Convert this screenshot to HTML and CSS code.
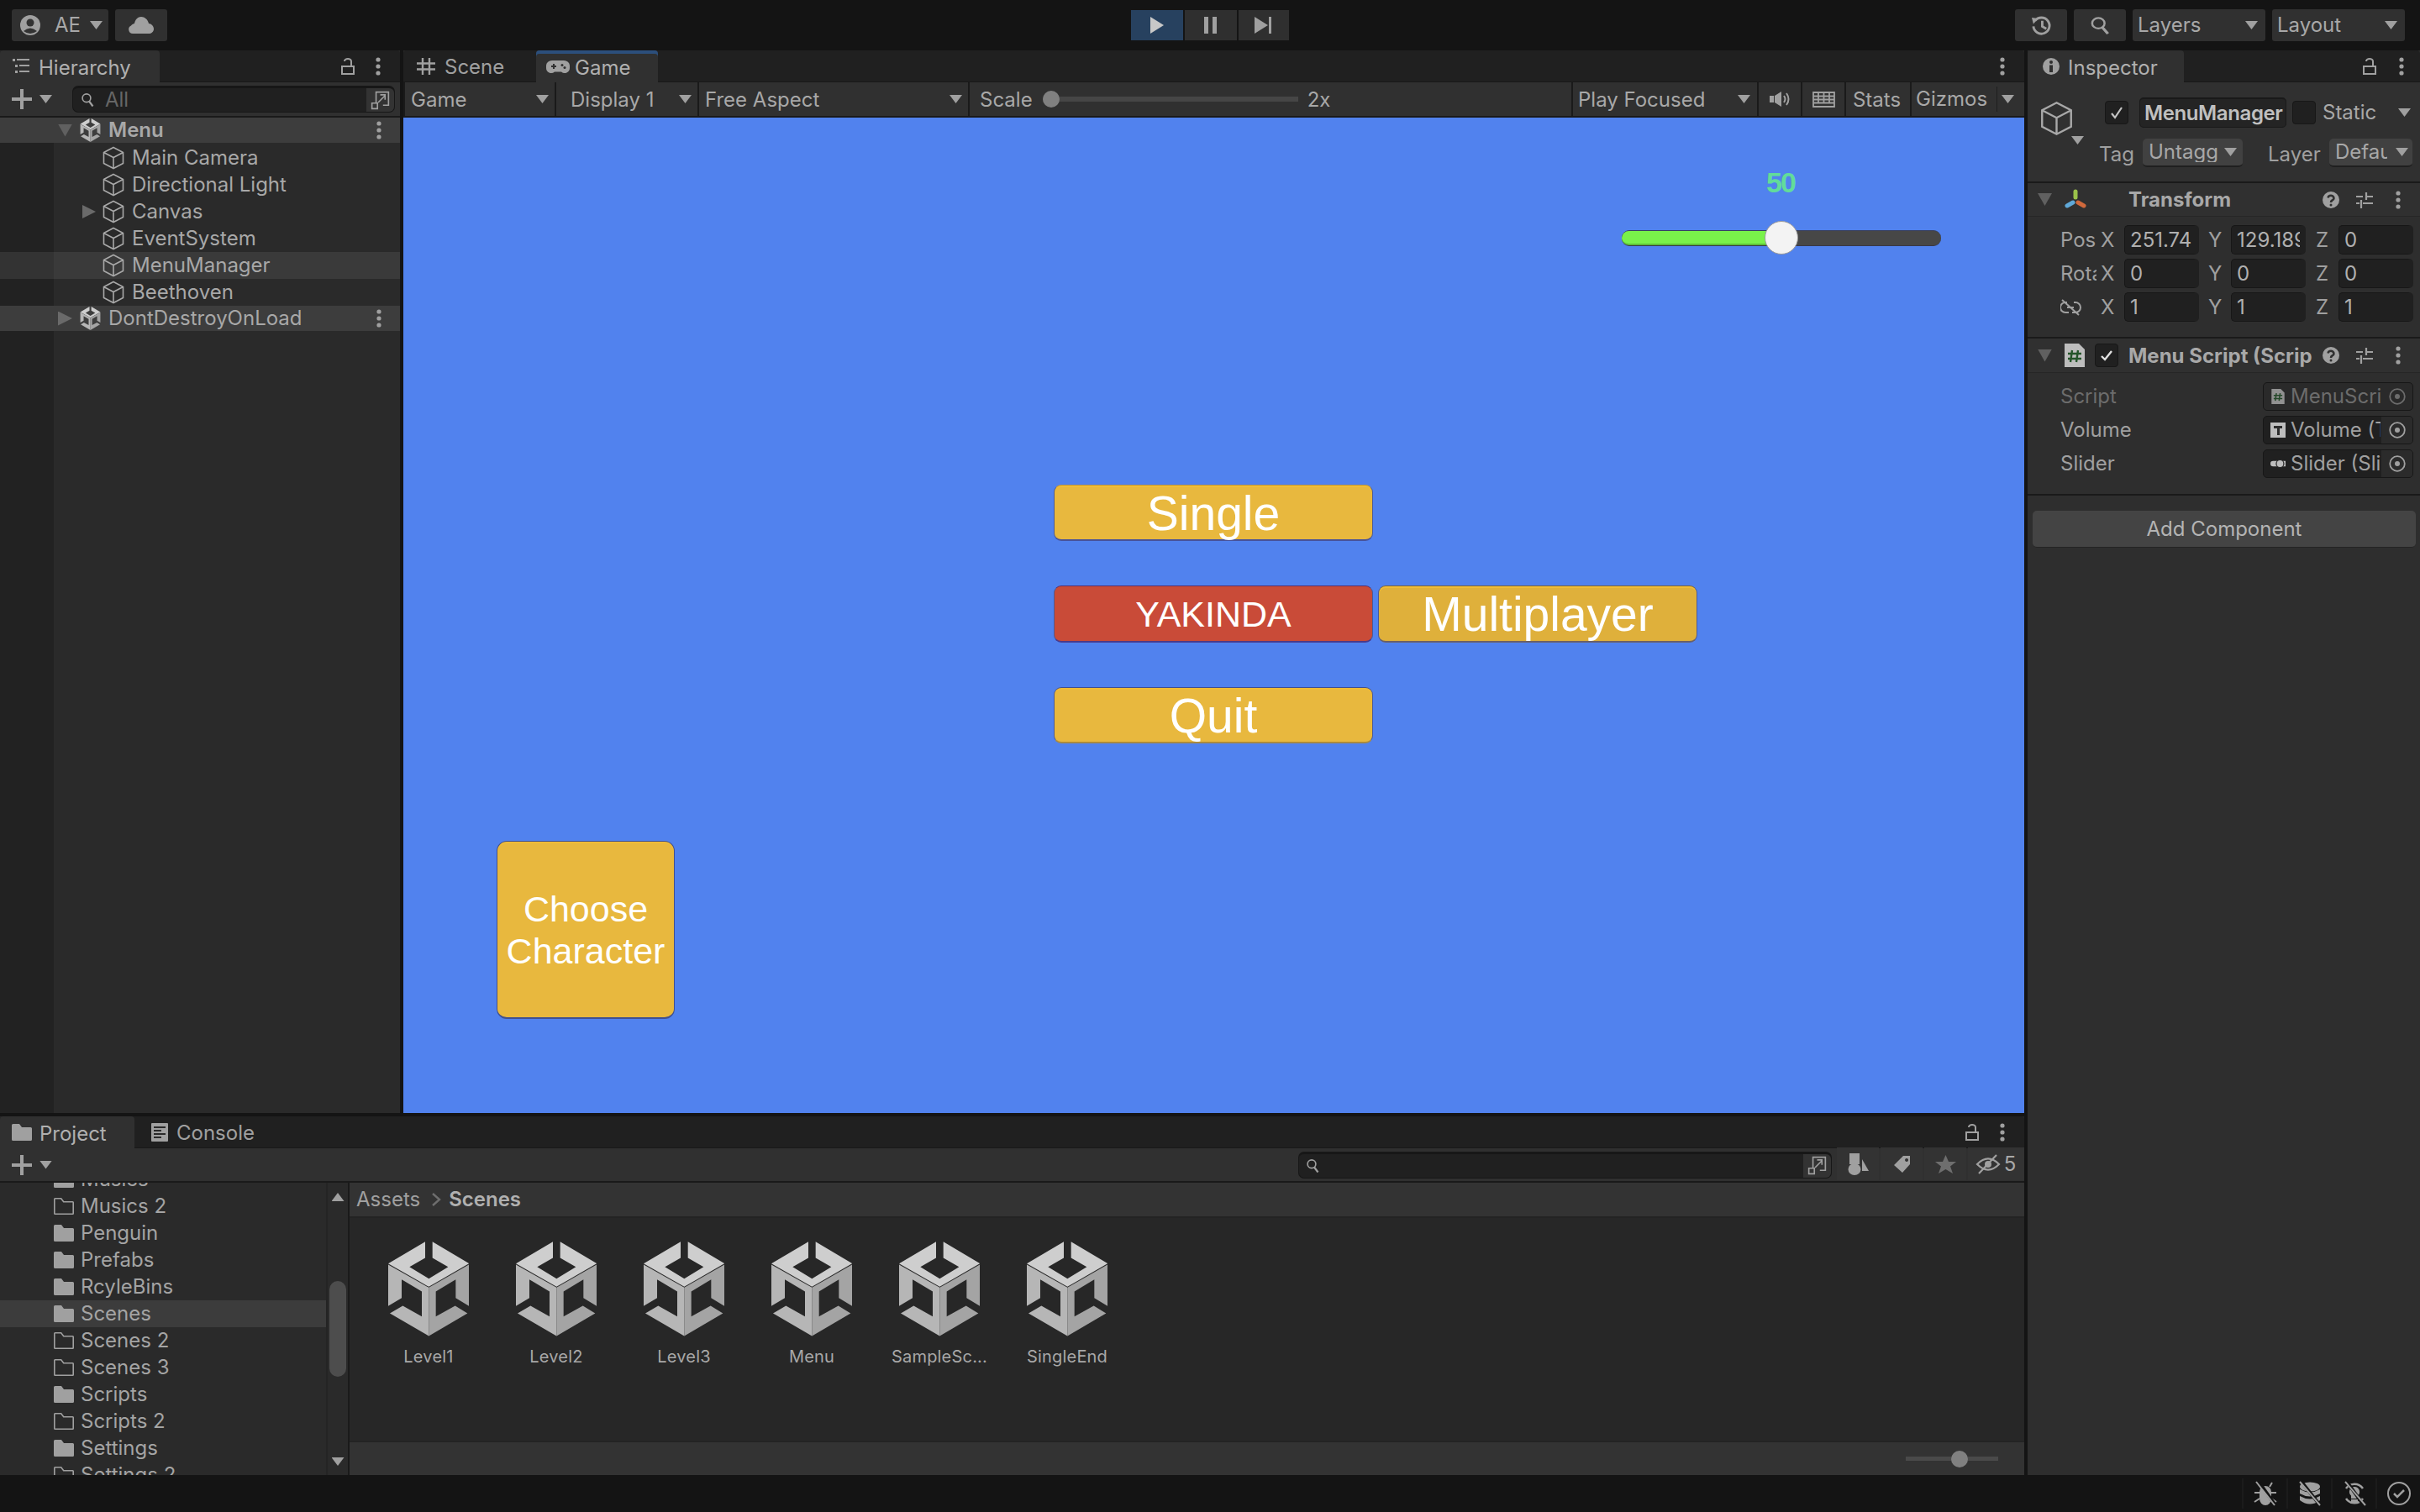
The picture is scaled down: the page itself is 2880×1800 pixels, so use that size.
FILE: index.html
```html
<!DOCTYPE html>
<html lang="en">
<head>
<meta charset="utf-8">
<title>Unity Editor</title>
<link rel="stylesheet" href="styles.css">
</head>
<body>
<svg class="defs" xmlns="http://www.w3.org/2000/svg">
  <symbol id="i-unity" viewBox="0 0 288 338">
    <path fill="#cecece" d="M132 0v58L76 90l69 42 69-42-56-32V0l131 78-144 83L0 78z"/>
    <path fill="#b6b6b6" d="M0 82l145 82v173L6 256l46-27 68 38v-89L48 135v66L0 230z"/>
    <path fill="#a4a4a4" d="M288 82l-143 82v173l138-81-44-27-69 38v-89l71-43v66l47 29z"/>
  </symbol>
  <symbol id="i-cube" viewBox="0 0 26 28">
    <path fill="none" stroke="currentColor" stroke-width="1.6" d="M13 1.500l11.500 6v13l-11.500 6-11.500-6v-13zM1.500 7.500l11.500 6 11.500-6M13 13.500v13"/>
  </symbol>
  <symbol id="i-dots" viewBox="0 0 8 22">
    <circle cx="4" cy="3" r="2.600" fill="currentColor"/><circle cx="4" cy="11" r="2.600" fill="currentColor"/><circle cx="4" cy="19" r="2.600" fill="currentColor"/>
  </symbol>
  <symbol id="i-lock" viewBox="0 0 16 20">
    <path fill="none" stroke="currentColor" stroke-width="2" d="M1 10h14v9H1zM4 4a4 3 0 0 1 8 0v6"/>
  </symbol>
  <symbol id="i-folder" viewBox="0 0 24 20">
    <path fill="currentColor" d="M0 1.500A1.500 1.500 0 0 1 1.500 0H9l3 4h10.500A1.500 1.500 0 0 1 24 5.500v13a1.500 1.500 0 0 1-1.500 1.500h-21A1.500 1.500 0 0 1 0 18.500z"/>
  </symbol>
  <symbol id="i-folder-o" viewBox="0 0 24 20">
    <path fill="none" stroke="currentColor" stroke-width="1.600" d="M.8 1.500q0-.7.7-.7h7.200l3 4h10.800q.7 0 .7.700v13q0 .7-.7.700h-21q-.7 0-.7-.7z"/>
  </symbol>
  <symbol id="i-search" viewBox="0 0 22 24">
    <circle cx="9" cy="9" r="6.500" fill="none" stroke="currentColor" stroke-width="2.200"/><path d="M13 14l6 8" stroke="currentColor" stroke-width="3"/>
  </symbol>
  <symbol id="i-scenesearch" viewBox="0 0 28 28">
    <path fill="none" stroke="currentColor" stroke-width="2" d="M8 18V2h18v19h-8"/><path fill="none" stroke="currentColor" stroke-width="2" d="M2 18h8v8H2zM11 17l10-10M14 6h7v7"/>
  </symbol>
  <symbol id="i-help" viewBox="0 0 20 20">
    <circle cx="10" cy="10" r="10" fill="currentColor"/><path fill="none" stroke="#303030" stroke-width="2.600" d="M6.500 7.500a3.500 3 0 1 1 5 3q-1.500.8-1.500 2.500"/><circle cx="10" cy="16" r="1.500" fill="#303030"/>
  </symbol>
  <symbol id="i-sliders" viewBox="0 0 20 20">
    <path fill="none" stroke="currentColor" stroke-width="2.200" d="M0 6h8M12 6h8M0 14h4M8 14h12M12 1v9M6 10v10"/>
  </symbol>
  <symbol id="i-target" viewBox="0 0 20 20">
    <circle cx="10" cy="10" r="8.800" fill="none" stroke="currentColor" stroke-width="1.800"/><circle cx="10" cy="10" r="3" fill="currentColor"/>
  </symbol>
  <symbol id="i-script" viewBox="0 0 24 28">
    <path fill="#bdbdbd" d="M0 0h17l7 7v21H0z"/><path fill="none" stroke="#24552a" stroke-width="2.400" d="M9 8l-2 14M16 8l-2 14M4 12h16M4 18h16"/>
  </symbol>
</svg>

<div class="app">
  <header class="topbar">
    <div class="top-left">
      <div class="tbtn account">
        <svg class="ic-user" viewBox="0 0 24 24"><circle cx="12" cy="12" r="12" fill="#a0a0a0"/><circle cx="12" cy="9" r="4.500" fill="#333"/><path d="M4 19q8-7 16 0-8 6-16 0z" fill="#333"/></svg>
        <span class="account-name">AE</span>
        <i class="tri-down"></i>
      </div>
      <div class="tbtn cloud">
        <svg class="ic-cloud" viewBox="0 0 30 20"><path fill="#a0a0a0" d="M5 20a5 5 0 0 1-2-9.500C4 9 6 8 7 8 8 3 11 0 15 0s8 3 9 8c3 0 6 3 6 6.500S27 20 24 20z"/></svg>
      </div>
    </div>
    <div class="play-group">
      <div class="pbtn active"><svg viewBox="0 0 16 20" class="ic-play"><path fill="#c8c8c8" d="M0 0l16 10L0 20z"/></svg></div>
      <div class="pbtn"><svg viewBox="0 0 16 20" class="ic-play"><path fill="#a0a0a0" d="M0 0h5v20H0zM10 0h5v20h-5z"/></svg></div>
      <div class="pbtn"><svg viewBox="0 0 22 20" class="ic-step"><path fill="#a0a0a0" d="M0 0l16 10L0 20zM17 0h3v20h-3z"/></svg></div>
    </div>
    <div class="top-right">
      <div class="tbtn square"><svg class="ic-hist" viewBox="0 0 26 24"><path fill="none" stroke="#a0a0a0" stroke-width="3" d="M5 6a10 10 0 1 1-2 7M14 6v7l5 3"/><path fill="#a0a0a0" d="M1 2l8 1-6 7z"/></svg></div>
      <div class="tbtn square"><svg class="ic-hist" viewBox="0 0 22 24" preserveAspectRatio="none"><use href="#i-search" color="#a0a0a0"/></svg></div>
      <div class="tbtn drop"><span>Layers</span><i class="tri-down"></i></div>
      <div class="tbtn drop"><span>Layout</span><i class="tri-down"></i></div>
    </div>
  </header>

  <div class="workspace">
    <div class="left-col">
      <div class="top-row">
        <section class="panel hierarchy">
          <div class="tabstrip">
            <div class="tab active hier-tab">
              <svg class="ic-tab" viewBox="0 0 20 18"><path fill="#a0a0a0" d="M0 0h3v3H0zM5 0h15v2H5zM3 7h3v3H3zM8 7h12v2H8zM3 14h3v3H3zM8 14h12v2H8z"/></svg>
              <span>Hierarchy</span>
            </div>
            <div class="tab-tools">
              <svg class="ic-lock"><use href="#i-lock"/></svg>
              <svg class="ic-dots"><use href="#i-dots"/></svg>
            </div>
          </div>
          <div class="hier-toolbar">
            <div class="plus-add"><span class="plus"></span><i class="tri-down"></i></div>
            <div class="search hier-search">
              <svg class="ic-mini-search"><use href="#i-search"/></svg>
              <span class="search-hint">All</span>
              <div class="search-btn"><svg class="ic-ss"><use href="#i-scenesearch"/></svg></div>
            </div>
          </div>
          <div class="hier-list">
            <div class="scene-row">
              <i class="tri-down large scene-arrow"></i>
              <svg class="ic-scene"><use href="#i-unity"/></svg>
              <span class="bold">Menu</span>
              <svg class="ic-dots row-dots"><use href="#i-dots"/></svg>
            </div>
            <div class="go-list">
              <div class="go-row"><svg class="ic-cube"><use href="#i-cube"/></svg><span>Main Camera</span></div>
              <div class="go-row"><svg class="ic-cube"><use href="#i-cube"/></svg><span>Directional Light</span></div>
              <div class="go-row"><i class="tri-right go-arrow"></i><svg class="ic-cube"><use href="#i-cube"/></svg><span>Canvas</span></div>
              <div class="go-row"><svg class="ic-cube"><use href="#i-cube"/></svg><span>EventSystem</span></div>
              <div class="go-row hover"><svg class="ic-cube"><use href="#i-cube"/></svg><span>MenuManager</span></div>
              <div class="go-row"><svg class="ic-cube"><use href="#i-cube"/></svg><span>Beethoven</span></div>
            </div>
            <div class="scene-row">
              <i class="tri-right scene-arrow"></i>
              <svg class="ic-scene"><use href="#i-unity"/></svg>
              <span>DontDestroyOnLoad</span>
              <svg class="ic-dots row-dots"><use href="#i-dots"/></svg>
            </div>
            <div class="hier-rest"></div>
          </div>
        </section>

        <section class="panel game">
          <div class="tabstrip">
            <div class="tab scene-tab">
              <svg class="ic-tab" viewBox="0 0 22 20"><path fill="none" stroke="#a0a0a0" stroke-width="2.400" d="M7 0v20M15 0v20M0 6.500h22M0 13.500h22"/></svg>
              <span>Scene</span>
            </div>
            <div class="tab active game-tab">
              <svg class="ic-pad" viewBox="0 0 28 15"><path fill="#a0a0a0" d="M7 0h14a7 6 0 0 1 7 6v3a6 6 0 0 1-10 4.500h-8A6 6 0 0 1 0 9V6a7 6 0 0 1 7-6z"/><path fill="#303030" d="M6 6h2V4h2v2h2v2h-2v2H8V8H6z"/><circle cx="19" cy="5.500" r="1.500" fill="#303030"/><circle cx="22" cy="8.500" r="1.500" fill="#303030"/></svg>
              <span>Game</span>
            </div>
            <div class="tab-tools"><svg class="ic-dots"><use href="#i-dots"/></svg></div>
          </div>
          <div class="game-toolbar">
            <div class="seg seg-game"><span>Game</span><i class="tri-down"></i></div>
            <div class="seg seg-display"><span>Display 1</span><i class="tri-down"></i></div>
            <div class="seg seg-aspect"><span>Free Aspect</span><i class="tri-down"></i></div>
            <div class="seg seg-scale">
              <span>Scale</span>
              <div class="scale-slider"><i class="knob"></i></div>
              <span>2x</span>
            </div>
            <div class="seg seg-play"><span>Play Focused</span><i class="tri-down"></i></div>
            <div class="seg seg-audio"><svg class="ic-audio" viewBox="0 0 25 18"><path fill="#a0a0a0" d="M0 5h5v8H0zM6 5l8-5v18l-8-5z"/><path fill="none" stroke="#a0a0a0" stroke-width="2" d="M17 5q3 4 0 8M20 2q5 7 0 14"/></svg></div>
            <div class="seg seg-keys"><svg class="ic-keys" viewBox="0 0 27 19"><path fill="none" stroke="#a0a0a0" stroke-width="1.800" d="M1 1h25v17H1zM1 5.500h25M1 9.500h25M1 13.500h25M7 1v12.500M13.500 1v12.500M20 1v12.500"/></svg></div>
            <div class="seg seg-stats"><span>Stats</span></div>
            <div class="seg seg-gizmos"><span class="giz-label">Gizmos</span><i class="tri-down"></i></div>
          </div>
          <div class="canvas">
            <div class="volume-label">50</div>
            <div class="volume-slider"><div class="volume-fill"></div><div class="volume-knob"></div></div>
            <div class="btn btn-single">Single</div>
            <div class="btn btn-red">YAKINDA</div>
            <div class="btn btn-multi">Multiplayer</div>
            <div class="btn btn-quit">Quit</div>
            <div class="btn btn-choose">Choose<br>Character</div>
          </div>
        </section>
      </div>

      <section class="panel project">
        <div class="tabstrip">
          <div class="tab active proj-tab">
            <svg class="ic-tabf"><use href="#i-folder"/></svg>
            <span>Project</span>
          </div>
          <div class="tab console-tab">
            <svg class="ic-tab" viewBox="0 0 20 22"><path fill="#a0a0a0" d="M1 0h18q1 0 1 1v20q0 1-1 1H1q-1 0-1-1V1q0-1 1-1z"/><path stroke="#2a2a2a" stroke-width="2" d="M3 5h14M3 9h9M3 13h14M3 17h9"/></svg>
            <span>Console</span>
          </div>
          <div class="tab-tools">
            <svg class="ic-lock"><use href="#i-lock"/></svg>
            <svg class="ic-dots"><use href="#i-dots"/></svg>
          </div>
        </div>
        <div class="proj-toolbar">
          <div class="plus-add"><span class="plus"></span><i class="tri-down"></i></div>
          <div class="search proj-search">
            <svg class="ic-mini-search"><use href="#i-search"/></svg>
            <div class="search-btn"><svg class="ic-ss"><use href="#i-scenesearch"/></svg></div>
          </div>
          <div class="pt-btn"><svg class="ic-shapes" viewBox="0 0 25 26"><path fill="#a0a0a0" d="M2 0h12v13H2z"/><ellipse cx="8" cy="19" rx="7.500" ry="7" fill="#a0a0a0"/><path fill="#a0a0a0" d="M17 7l8 14h-8z"/></svg></div>
          <div class="pt-btn"><svg class="ic-tag" viewBox="0 0 19 20"><path fill="#a0a0a0" fill-rule="evenodd" d="M11 0h8v10l-9 10L0 11zM15 3a2 2 0 1 0 .1 0z"/></svg></div>
          <div class="pt-btn"><svg class="ic-star" viewBox="0 0 25 22"><path fill="#6e6e6e" d="M12.500 0l3.500 8h9l-7 5.500 3 8.500-8.500-5-8.500 5 3-8.500L0 8h9z"/></svg></div>
          <div class="pt-btn hidden-count"><svg class="ic-eye" viewBox="0 0 28 22"><path fill="none" stroke="#a0a0a0" stroke-width="2.200" d="M1 11q13-13 26 0-13 13-26 0z"/><circle cx="14" cy="11" r="4" fill="#a0a0a0"/><path stroke="#a0a0a0" stroke-width="2.200" d="M24 0L3 22"/></svg><span>5</span></div>
        </div>
        <div class="proj-body">
          <div class="tree">
            <div class="tree-list">
              <div class="tree-row"><svg class="ic-folder"><use href="#i-folder"/></svg><span>Musics</span></div>
              <div class="tree-row"><svg class="ic-folder"><use href="#i-folder-o"/></svg><span>Musics 2</span></div>
              <div class="tree-row"><svg class="ic-folder"><use href="#i-folder"/></svg><span>Penguin</span></div>
              <div class="tree-row"><svg class="ic-folder"><use href="#i-folder"/></svg><span>Prefabs</span></div>
              <div class="tree-row"><svg class="ic-folder"><use href="#i-folder"/></svg><span>RcyleBins</span></div>
              <div class="tree-row sel"><svg class="ic-folder"><use href="#i-folder"/></svg><span>Scenes</span></div>
              <div class="tree-row"><svg class="ic-folder"><use href="#i-folder-o"/></svg><span>Scenes 2</span></div>
              <div class="tree-row"><svg class="ic-folder"><use href="#i-folder-o"/></svg><span>Scenes 3</span></div>
              <div class="tree-row"><svg class="ic-folder"><use href="#i-folder"/></svg><span>Scripts</span></div>
              <div class="tree-row"><svg class="ic-folder"><use href="#i-folder-o"/></svg><span>Scripts 2</span></div>
              <div class="tree-row"><svg class="ic-folder"><use href="#i-folder"/></svg><span>Settings</span></div>
              <div class="tree-row"><svg class="ic-folder"><use href="#i-folder-o"/></svg><span>Settings 2</span></div>
            </div>
            <div class="scrollbar">
              <i class="tri-up"></i>
              <div class="scroll-track"><div class="scroll-thumb"></div></div>
              <i class="tri-down sb-down"></i>
            </div>
          </div>
          <div class="assets">
            <div class="breadcrumb">
              <span>Assets</span>
              <svg class="ic-chev" viewBox="0 0 12 16"><path fill="none" stroke="#6e6e6e" stroke-width="2.400" d="M2 1l8 7-8 7"/></svg>
              <span class="bold">Scenes</span>
            </div>
            <div class="asset-grid">
              <div class="asset"><svg class="ic-asset"><use href="#i-unity"/></svg><span>Level1</span></div>
              <div class="asset"><svg class="ic-asset"><use href="#i-unity"/></svg><span>Level2</span></div>
              <div class="asset"><svg class="ic-asset"><use href="#i-unity"/></svg><span>Level3</span></div>
              <div class="asset"><svg class="ic-asset"><use href="#i-unity"/></svg><span>Menu</span></div>
              <div class="asset"><svg class="ic-asset"><use href="#i-unity"/></svg><span>SampleSc...</span></div>
              <div class="asset"><svg class="ic-asset"><use href="#i-unity"/></svg><span>SingleEnd</span></div>
            </div>
            <div class="asset-foot"><div class="foot-slider"><i class="foot-knob"></i></div></div>
          </div>
        </div>
      </section>
    </div>

    <section class="panel inspector">
      <div class="tabstrip">
        <div class="tab active insp-tab">
          <svg class="ic-tab" viewBox="0 0 20 20"><circle cx="10" cy="10" r="10" fill="#a0a0a0"/><circle cx="10" cy="5" r="2" fill="#303030"/><path fill="#303030" d="M8 8.500h4V17H8z"/></svg>
          <span>Inspector</span>
        </div>
        <div class="tab-tools">
          <svg class="ic-lock"><use href="#i-lock"/></svg>
          <svg class="ic-dots"><use href="#i-dots"/></svg>
        </div>
      </div>
      <div class="insp-head">
        <div class="head-icon">
          <svg class="ic-bigcube"><use href="#i-cube"/></svg>
          <i class="tri-down"></i>
        </div>
        <div class="head-fields">
          <div class="head-row1">
            <span class="check on"><svg viewBox="0 0 16 16"><path fill="none" stroke="#c4c4c4" stroke-width="2.200" d="M2 9l4 5 8-12"/></svg></span>
            <span class="name-field">MenuManager</span>
            <span class="check"></span>
            <span class="static-label">Static</span>
            <i class="tri-down"></i>
          </div>
          <div class="head-row2">
            <span class="lbl tag-lbl">Tag</span>
            <span class="dropdown tag-dd"><span class="dd-text">Untagg</span><i class="tri-down"></i></span>
            <span class="lbl layer-lbl">Layer</span>
            <span class="dropdown layer-dd"><span class="dd-text">Defau</span><i class="tri-down"></i></span>
          </div>
        </div>
      </div>

      <div class="comp-head">
        <i class="tri-down large comp-arrow"></i>
        <svg class="ic-transform" viewBox="0 0 26 26"><path stroke="#9ac24a" stroke-width="5" stroke-linecap="round" d="M13 3v7"/><path stroke="#d0693c" stroke-width="5" stroke-linecap="round" d="M16 16l7 4"/><path stroke="#5fa8d8" stroke-width="5" stroke-linecap="round" d="M10 16l-7 4"/></svg>
        <span class="comp-title">Transform</span>
        <svg class="ic-help"><use href="#i-help"/></svg>
        <svg class="ic-sliders"><use href="#i-sliders"/></svg>
        <svg class="ic-dots"><use href="#i-dots"/></svg>
      </div>
      <div class="transform-rows">
        <div class="t-row">
          <span class="t-name">Posi</span>
          <span class="axis">X</span><span class="num">251.74</span>
          <span class="axis y">Y</span><span class="num">129.189</span>
          <span class="axis z">Z</span><span class="num">0</span>
        </div>
        <div class="t-row">
          <span class="t-name">Rota</span>
          <span class="axis">X</span><span class="num">0</span>
          <span class="axis y">Y</span><span class="num">0</span>
          <span class="axis z">Z</span><span class="num">0</span>
        </div>
        <div class="t-row">
          <span class="t-name"><svg class="ic-link" viewBox="0 0 24 20"><path fill="none" stroke="#a0a0a0" stroke-width="2" d="M8 4H6a6 6 0 0 0 0 12h4M16 4h2a6 6 0 0 1 0 12h-4M8 10h8M2 1l20 18"/></svg></span>
          <span class="axis">X</span><span class="num">1</span>
          <span class="axis y">Y</span><span class="num">1</span>
          <span class="axis z">Z</span><span class="num">1</span>
        </div>
      </div>

      <div class="comp-head script-head">
        <i class="tri-down large comp-arrow"></i>
        <svg class="ic-script"><use href="#i-script"/></svg>
        <span class="check on script-check"><svg viewBox="0 0 16 16"><path fill="none" stroke="#e0e0e0" stroke-width="2.400" d="M2 9l4 4 8-10"/></svg></span>
        <span class="comp-title">Menu Script (Scrip</span>
        <svg class="ic-help"><use href="#i-help"/></svg>
        <svg class="ic-sliders"><use href="#i-sliders"/></svg>
        <svg class="ic-dots"><use href="#i-dots"/></svg>
      </div>
      <div class="script-rows">
        <div class="s-row dim">
          <span class="s-name">Script</span>
          <span class="objfield"><svg class="ic-objscript"><use href="#i-script"/></svg><span class="obj-text">MenuScri</span><span class="obj-target"><svg class="ic-target"><use href="#i-target"/></svg></span></span>
        </div>
        <div class="s-row">
          <span class="s-name">Volume</span>
          <span class="objfield"><svg class="ic-objscript" viewBox="0 0 18 18"><path fill="#bdbdbd" d="M0 0h18v18H0z"/><path fill="#2c2c2c" d="M4 4h10v3h-3v8H8V7H4z"/></svg><span class="obj-text">Volume (T</span><span class="obj-target shade"><svg class="ic-target"><use href="#i-target"/></svg></span></span>
        </div>
        <div class="s-row">
          <span class="s-name">Slider</span>
          <span class="objfield"><svg class="ic-objscript" viewBox="0 0 22 12"><path fill="#bdbdbd" d="M4 2h18v8H4a4 4 0 0 1 0-8z"/><circle cx="14" cy="6" r="5.500" fill="#bdbdbd" stroke="#222" stroke-width="1.500"/></svg><span class="obj-text">Slider (Slider)</span><span class="obj-target shade"><svg class="ic-target"><use href="#i-target"/></svg></span></span>
        </div>
      </div>
      <div class="add-wrap"><div class="add-btn">Add Component</div></div>
    </section>
  </div>

  <footer class="statusbar">
    <div class="status-cell"><svg class="ic-status" viewBox="0 0 28 28"><path fill="#a0a0a0" d="M14 5a7 7 0 0 1 7 7v8a7 8 0 0 1-14 0v-8a7 7 0 0 1 7-7z"/><path fill="none" stroke="#a0a0a0" stroke-width="2" d="M9 6L6 1M19 6l3-5M7 13H1M21 13h6M7 20l-6 4M21 20l6 4"/><path stroke="#141414" stroke-width="4" d="M6 0l20 28"/><path stroke="#a0a0a0" stroke-width="2" d="M3 0l22 28"/></svg></div>
    <div class="status-cell"><svg class="ic-status" viewBox="0 0 28 28"><ellipse cx="14" cy="6" rx="12" ry="5.500" fill="#a0a0a0"/><path fill="#a0a0a0" d="M2 9q12 7 24 0v5q-12 7-24 0zM2 17q12 7 24 0v5q-12 9-24 0z"/><path stroke="#141414" stroke-width="4" d="M4 0l22 28"/><path stroke="#a0a0a0" stroke-width="2" d="M2 0l24 28"/></svg></div>
    <div class="status-cell"><svg class="ic-status" viewBox="0 0 28 28"><path fill="none" stroke="#a0a0a0" stroke-width="2.500" d="M4 8a12 12 0 0 1 20 0M24 20a12 12 0 0 1-20 0"/><path fill="#a0a0a0" d="M14 6a6 6 0 0 1 4 10.500V20h-8v-3.500A6 6 0 0 1 14 6zM10 21h8v3h-8z"/><path stroke="#141414" stroke-width="4" d="M5 0l20 28"/><path stroke="#a0a0a0" stroke-width="2" d="M3 0l24 28"/></svg></div>
    <div class="status-cell"><svg class="ic-status" viewBox="0 0 28 28"><circle cx="14" cy="14" r="13" fill="none" stroke="#a0a0a0" stroke-width="2"/><path fill="none" stroke="#a0a0a0" stroke-width="2.500" d="M8 14l4 4 8-8"/></svg></div>
  </footer>
</div>
</body>
</html>
```
FILE: styles.css
```css
* { box-sizing: border-box; }
html, body { margin: 0; padding: 0; }
body {
  width: 2880px; height: 1800px; overflow: hidden;
  background: #141414; color: #a8a8a8;
  font-family: "Inter", "Liberation Sans", sans-serif; font-size: 24px; line-height: 1;
}
.defs { position: absolute; width: 0; height: 0; }
.app { width: 2880px; height: 1800px; display: flex; flex-direction: column; }
svg { display: block; flex: none; overflow: visible; }
i { display: block; flex: none; }
.bold { font-weight: 600; }

.tri-down, .tri-up, .tri-right { background: #a0a0a0; }
.tri-down { width: 15px; height: 10px; clip-path: polygon(0 0, 100% 0, 50% 100%); }
.tri-up { width: 15px; height: 10px; clip-path: polygon(50% 0, 100% 100%, 0 100%); }
.tri-right { width: 16px; height: 16px; clip-path: polygon(0 0, 100% 50%, 0 100%); background: #6a6a6a; }
.tri-down.large { width: 17px; height: 15px; background: #606060; }

/* top bar */
.topbar { height: 60px; flex: none; display: grid; grid-template-columns: 1346px 188px 1fr; align-items: center; background: #141414; }
.top-left { display: flex; gap: 8px; padding-left: 14px; }
.tbtn { height: 38px; background: #303030; border-radius: 3px; display: flex; align-items: center; font-size: 24px; }
.account { width: 115px; padding-left: 10px; }
.ic-user { width: 24px; height: 24px; }
.account-name { margin-left: 17px; width: 42px; }
.cloud { width: 62px; justify-content: center; }
.ic-cloud { width: 30px; height: 20px; }
.play-group { display: flex; gap: 2px; }
.pbtn { width: 62px; height: 36px; background: #2f2f2f; display: flex; align-items: center; justify-content: center; }
.pbtn:last-child { width: 60px; }
.pbtn.active { background: #27415f; }
.ic-play { width: 16px; height: 20px; }
.ic-step { width: 22px; height: 20px; }
.top-right { display: flex; gap: 8px; justify-content: flex-end; padding-right: 18px; }
.square { width: 62px; justify-content: center; }
.ic-hist { width: 25px; height: 23px; }
.drop { width: 158px; padding: 0 9px 0 6px; justify-content: space-between; }

/* layout */
.workspace { height: 1696px; flex: none; display: flex; gap: 4px; }
.left-col { width: 2409px; flex: none; display: flex; flex-direction: column; gap: 4px; }
.top-row { height: 1265px; flex: none; display: flex; gap: 4px; }
.panel { background: #282828; display: flex; flex-direction: column; min-width: 0; }
.tabstrip { height: 38px; flex: none; display: flex; align-items: stretch; background: #202020; border-bottom: 1px solid #181818; border-radius: 4px 4px 0 0; }
.tab { display: flex; align-items: center; font-size: 24px; color: #a0a0a0; }
.tab span { margin-top: 3px; }
.tab.active { background: #303030; border-radius: 4px 4px 0 0; margin-bottom: -1px; color: #b0b0b0; }
.tab-tools { margin-left: auto; display: flex; align-items: center; }
.ic-tab { width: 20px; height: 20px; }
.ic-lock { width: 16px; height: 20px; color: #a0a0a0; }
.ic-dots { width: 8px; height: 22px; color: #a0a0a0; }

/* hierarchy */
.hierarchy { width: 476px; flex: none; }
.hier-tab { width: 190px; padding-left: 15px; gap: 11px; }
.hierarchy .tab-tools { gap: 24px; padding-right: 22px; }
.hier-toolbar { height: 42px; flex: none; background: #303030; border-bottom: 2px solid #1a1a1a; display: flex; align-items: center; padding-left: 14px; }
.plus-add { display: flex; align-items: center; width: 72px; flex: none; }
.plus { width: 24px; height: 24px; background:
  linear-gradient(#a0a0a0, #a0a0a0) center / 100% 4px no-repeat,
  linear-gradient(#a0a0a0, #a0a0a0) center / 4px 100% no-repeat; }
.plus-add .tri-down { margin-left: 9px; }
.search { height: 32px; background: #202020; border: 1px solid #171717; border-top-width: 3px; border-radius: 7px; display: flex; align-items: center; color: #a0a0a0; }
.hier-search { width: 384px; }
.ic-mini-search { width: 17px; height: 18px; margin-left: 9px; color: #a0a0a0; }
.search-hint { margin-left: 12px; color: #666; }
.search-btn { margin-left: auto; width: 33px; height: 100%; background: #333; display: flex; align-items: center; justify-content: center; border-radius: 0 6px 6px 0; }
.ic-ss { width: 23px; height: 23px; color: #a0a0a0; }
.hier-list { flex: 1; display: flex; flex-direction: column; background: linear-gradient(90deg, #222 64px, #2a2a2a 64px); }
.scene-row { height: 30px; flex: none; background: #3d3d3d; display: flex; align-items: center; position: relative; padding-left: 69px; }
.scene-row:first-child { margin-bottom: 2px; }
.scene-arrow { width: 17px; }
.scene-row .tri-right { height: 17px; }
.ic-scene { width: 25px; height: 28px; margin-left: 9px; margin-right: 9px; }
.row-dots { margin-left: auto; margin-right: 21px; }
.go-row { height: 32px; display: flex; align-items: center; padding-left: 122px; position: relative; }
.go-row.hover { background: linear-gradient(90deg, #333 64px, #3a3a3a 64px); }
.go-arrow { position: absolute; left: 98px; top: 8px; }
.ic-cube { width: 26px; height: 28px; margin-right: 9px; color: #a8a8a8; }
.hier-rest { flex: 1; margin-top: 2px; }

/* game */
.game { width: 1929px; flex: none; }
.scene-tab { width: 158px; padding-left: 16px; gap: 11px; }
.scene-tab .ic-tab { width: 22px; }
.game-tab { width: 145px; padding-left: 12px; gap: 6px; box-shadow: inset 0 4px 0 #2c4f7c; }
.ic-pad { width: 28px; height: 15px; }
.game .tab-tools { padding-right: 22px; }
.game-toolbar { height: 42px; flex: none; background: #1a1a1a; display: flex; gap: 2px; padding-left: 2px; padding-bottom: 2px; }
.seg { background: #303030; display: flex; align-items: center; padding: 0 7px; font-size: 24px; }
.seg span { margin-top: 2px; }
.seg .tri-down { margin-left: auto; }
.seg-game { width: 178px; }
.seg-display { width: 168px; padding-left: 17px; }
.seg-aspect { width: 320px; }
.seg-scale { width: 716px; padding-left: 12px; }
.scale-slider { width: 304px; height: 6px; background: #464646; margin: 0 11px 0 12px; display: flex; align-items: center; }
.knob { width: 20px; height: 20px; border-radius: 50%; background: #808080; }
.seg-play { width: 219px; padding-left: 6px; padding-right: 8px; }
.seg-audio { width: 50px; justify-content: center; padding: 0; }
.ic-audio { width: 25px; height: 18px; }
.seg-keys { width: 50px; justify-content: center; padding: 0; }
.ic-keys { width: 27px; height: 19px; }
.seg-stats { width: 76px; justify-content: center; padding: 0 3px 0 0; }
.seg-gizmos { flex: 1; padding: 0 12px 0 5px; }
.seg-gizmos .giz-label { padding-right: 11px; border-right: 1px solid #1e1e1e; line-height: 30px; margin-top: 0; }
.canvas { flex: 1; position: relative; background: #5182ee; overflow: hidden; font-family: "Liberation Sans", Arial, sans-serif; }

/* in-game UI: a free canvas */
.btn {
  position: absolute; display: flex; align-items: center; justify-content: center; text-align: center;
  width: 380px; height: 67px; padding-top: 2px; background: #e8b83e; color: #fff; font-size: 57px;
  border-radius: 9px; border: 1px solid #4a5a9a; border-top-color: #b8923e; border-bottom: 2px solid #47529a;
  box-shadow: inset 0 2px 0 #f0bc38;
}
.btn-single { left: 774px; top: 437px; }
.btn-red { left: 774px; top: 557px; height: 68px; background: #c94b38; font-size: 43px; border-top-color: #553070; border-bottom-color: #493a8c; box-shadow: none; }
.btn-multi { left: 1160px; top: 557px; height: 68px; background: #dfb03b; border-top-color: #756444; border-bottom-color: #6a6068; }
.btn-quit { left: 774px; top: 678px; border-top-color: #41508f; border-bottom-color: #a88a42; }
.btn-choose { left: 111px; top: 861px; width: 212px; height: 212px; padding-top: 0; font-size: 43px; line-height: 50px; border-radius: 12px; border-color: #40508f; }
.volume-label { position: absolute; left: 1605px; top: 60px; width: 68px; text-align: center; font-size: 34px; font-weight: 700; letter-spacing: -2px; color: #62dc9a; }
.volume-slider { position: absolute; left: 1450px; top: 134px; width: 380px; height: 19px; background: #474747; border-radius: 9px; border-top: 1px solid #384060; border-bottom: 1px solid #373748; }
.volume-fill { width: 190px; height: 100%; background: #79f24a; border-radius: 9px 0 0 9px; border-bottom: 2px solid #5ec03a; }
.volume-knob { position: absolute; left: 170px; top: -12px; width: 40px; height: 40px; border-radius: 50%; background: #f3f3f3; border: 1px solid #9a9a9a; }

/* project */
.project { height: 427px; flex: none; overflow: hidden; }
.proj-tab { width: 160px; padding-left: 14px; gap: 9px; }
.ic-tabf { width: 24px; height: 20px; color: #a0a0a0; }
.console-tab { padding-left: 20px; gap: 10px; }
.console-tab .ic-tab { height: 22px; }
.project .tab-tools { gap: 24px; padding-right: 22px; }
.proj-toolbar { height: 41px; flex: none; background: #303030; border-bottom: 2px solid #1a1a1a; display: flex; align-items: center; padding-left: 14px; }
.proj-search { width: 635px; margin-left: 1459px; margin-right: 6px; }
.proj-search .ic-mini-search { margin-left: 8px; }
.pt-btn { width: 50px; height: 39px; margin-top: -2px; display: flex; align-items: center; justify-content: center; margin-right: 2px; background: #333; }
.hidden-count { width: 67px; margin-right: 0; gap: 5px; }
.ic-shapes { width: 25px; height: 26px; }
.ic-tag { width: 19px; height: 20px; }
.ic-star { width: 25px; height: 22px; }
.ic-eye { width: 28px; height: 22px; }
.proj-body { flex: 1; min-height: 0; display: flex; }
.tree { width: 414px; flex: none; display: flex; background: #2a2a2a; overflow: hidden; }
.tree-list { width: 388px; flex: none; margin-top: -20px; }
.tree-row { height: 32px; display: flex; align-items: center; padding-left: 64px; gap: 8px; color: #a4a4a4; }
.tree-row.sel { background: #3c3c3c; }
.ic-folder { width: 24px; height: 20px; color: #a0a0a0; }
.scrollbar { flex: 1; border-left: 2px solid #242424; display: flex; flex-direction: column; align-items: center; padding: 12px 0 11px; }
.scroll-track { flex: 1; width: 20px; padding-top: 95px; }
.scroll-thumb { height: 114px; background: #4d4d4d; border-radius: 10px; }
.assets { flex: 1; min-width: 0; border-left: 2px solid #1a1a1a; background: #272727; display: flex; flex-direction: column; }
.breadcrumb { height: 42px; flex: none; background: #333; border-bottom: 2px solid #232323; display: flex; align-items: center; padding-left: 8px; color: #a0a0a0; }
.breadcrumb .ic-chev { width: 12px; height: 16px; margin: 0 9px 0 13px; }
.breadcrumb .bold { color: #b0b0b0; }
.asset-grid { flex: 1; display: flex; padding: 28px 0 0 18px; align-items: flex-start; }
.asset { width: 152px; flex: none; display: flex; flex-direction: column; align-items: center; gap: 12px; font-size: 20px; letter-spacing: .2px; color: #a8a8a8; line-height: 24px; }
.ic-asset { width: 96px; height: 113px; }
.asset-foot { height: 41px; flex: none; background: #333; border-top: 2px solid #232323; display: flex; align-items: center; justify-content: flex-end; padding-right: 31px; }
.foot-slider { width: 110px; height: 5px; background: #4a4a4a; display: flex; align-items: center; }
.foot-knob { width: 20px; height: 20px; border-radius: 50%; background: #808080; margin-left: 54px; }

/* inspector */
.inspector { flex: 1; background: #2e2e2e; }
.insp-tab { width: 186px; padding-left: 18px; gap: 10px; }
.inspector .tab-tools { gap: 26px; padding-right: 18px; }
.insp-head { height: 120px; flex: none; background: #303030; border-bottom: 2px solid #1a1a1a; display: flex; }
.head-icon { width: 85px; flex: none; padding: 22px 0 0 15px; position: relative; }
.ic-bigcube { width: 39px; height: 42px; color: #a8a8a8; }
.head-icon .tri-down { position: absolute; left: 52px; top: 64px; }
.head-fields { flex: 1; display: flex; flex-direction: column; }
.head-row1 { height: 54px; flex: none; display: flex; align-items: center; padding: 18px 0 0 7px; }
.check { width: 28px; height: 28px; flex: none; background: #202020; border: 1px solid #171717; border-radius: 4px; display: flex; align-items: center; justify-content: center; }
.check svg { width: 16px; height: 16px; }
.name-field { width: 175px; height: 36px; margin-left: 13px; background: #242424; border: 1px solid #191919; border-top-width: 2px; border-radius: 5px; font-weight: 600; color: #c0c0c0; display: flex; align-items: center; padding-left: 5px; overflow: hidden; white-space: nowrap; flex: none; letter-spacing: -.4px; }
.head-row1 .check:nth-of-type(3) { margin-left: 7px; }
.static-label { margin-left: 8px; width: 90px; flex: none; }
.head-row2 { flex: 1; display: flex; align-items: flex-start; padding-top: 13px; font-size: 24px; }
.lbl { line-height: 38px; color: #a0a0a0; }
.tag-lbl { width: 52px; flex: none; }
.layer-lbl { margin-left: 30px; width: 73px; flex: none; }
.dropdown { height: 34px; background: #414141; border-bottom: 2px solid #1f1f1f; border-radius: 5px; display: flex; align-items: center; padding: 0 7px; overflow: hidden; flex: none; }
.dd-text { overflow: hidden; white-space: nowrap; flex: 1; }
.tag-dd { width: 119px; }
.layer-dd { width: 99px; padding-right: 5px; }
.layer-dd .dd-text { flex: none; width: 62px; margin-right: auto; }
.comp-head { height: 40px; flex: none; background: #303030; border-bottom: 1px solid #262626; display: flex; align-items: center; padding-left: 12px; position: relative; }
.comp-arrow { flex: none; }
.ic-transform { width: 26px; height: 26px; margin-left: 15px; }
.comp-title { position: absolute; left: 120px; font-weight: 700; color: #a8a8a8; white-space: nowrap; margin-top: 1px; }
.ic-help { width: 20px; height: 20px; color: #a0a0a0; margin-left: auto; }
.ic-sliders { width: 20px; height: 20px; color: #a0a0a0; margin-left: 20px; }
.comp-head .ic-dots { margin-left: 26px; margin-right: 22px; }
.transform-rows { height: 145px; flex: none; padding-top: 10px; border-bottom: 2px solid #1a1a1a; display: flex; flex-direction: column; gap: 5px; }
.t-row { height: 35px; flex: none; display: grid; grid-template-columns: 43px 33px 89px 38px 89px 39px 89px; align-items: center; padding-left: 39px; color: #a0a0a0; }
.t-name { overflow: hidden; white-space: nowrap; }
.ic-link { width: 24px; height: 20px; }
.axis { padding-left: 5px; }
.axis.y { padding-left: 11px; }
.axis.z { padding-left: 12px; }
.num { height: 35px; background: #202020; border: 1px solid #171717; border-right: 7px solid #202020; border-radius: 5px; display: flex; align-items: center; padding-left: 6px; overflow: hidden; white-space: nowrap; color: #b0b0b0; }
.script-head { height: 41px; }
.script-head .ic-script { width: 24px; height: 28px; margin-left: 15px; }
.script-head .script-check { margin-left: 12px; }
.script-rows { height: 146px; flex: none; padding-top: 11px; border-bottom: 2px solid #1a1a1a; display: flex; flex-direction: column; gap: 6px; }
.s-row { height: 34px; flex: none; display: flex; align-items: center; padding-left: 39px; color: #a0a0a0; }
.s-row.dim { color: #6c6c6c; }
.s-name { width: 241px; flex: none; }
.objfield { width: 179px; height: 34px; background: #202020; border: 1px solid #171717; border-radius: 5px; display: flex; align-items: center; padding-left: 8px; overflow: hidden; position: relative; }
.dim .objfield { background: #2a2a2a; }
.ic-objscript { width: 18px; height: 18px; flex: none; margin-right: 6px; }
.dim .ic-objscript { opacity: .7; }
.obj-text { white-space: nowrap; overflow: hidden; width: 107px; flex: none; }
.obj-target { position: absolute; right: 0; top: 0; bottom: 0; width: 37px; display: flex; align-items: center; justify-content: center; }
.obj-target.shade { background: #2b2b2b; }
.ic-target { width: 20px; height: 20px; color: #a0a0a0; }
.dim .ic-target { color: #6c6c6c; }
.add-wrap { padding: 18px 5px 0 6px; }
.add-btn { height: 44px; background: #444; border-bottom: 1px solid #242424; border-radius: 5px; display: flex; align-items: center; justify-content: center; color: #b4b4b4; }

/* status */
.statusbar { flex: 1; background: #141414; display: flex; align-items: center; justify-content: flex-end; }
.status-cell { width: 53px; height: 36px; border-left: 2px solid #1b1b1b; display: flex; align-items: center; justify-content: center; }
.ic-status { width: 28px; height: 28px; }
```
